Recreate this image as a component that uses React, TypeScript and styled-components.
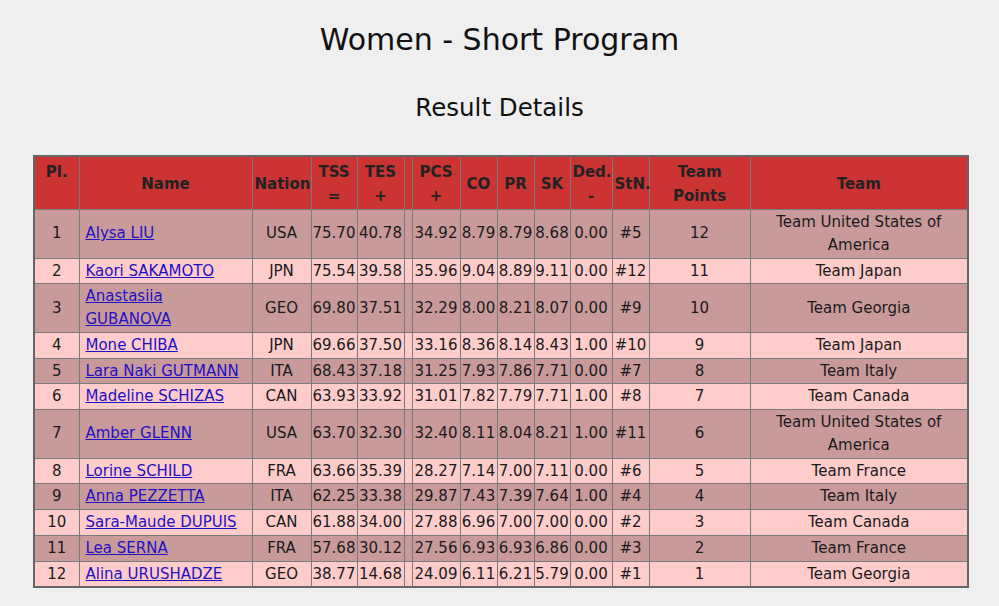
import React from 'react';
import styled, { createGlobalStyle } from 'styled-components';

const GlobalStyle = createGlobalStyle`
  body {
    margin: 0;
    background: #efefef;
    font-family: "DejaVu Sans", Verdana, sans-serif;
    color: #1a1a1a;
  }
`;

const Page = styled.div`
  display: flex;
  flex-direction: column;
  align-items: center;
  padding-top: 20px;
`;

const Title = styled.h1`
  margin: 0;
  font-size: 30px;
  font-weight: normal;
  line-height: 40px;
  color: #111;
`;

const Subtitle = styled.h2`
  margin: 28px 0 0;
  font-size: 24.5px;
  font-weight: normal;
  line-height: 40px;
  color: #111;
`;

const Table = styled.table`
  margin: 27px 0 0 3px;
  width: 934px;
  table-layout: fixed;
  border-collapse: collapse;
  border: 2px solid #666;
  font-size: 15px;
  line-height: 22.75px;
`;

const Th = styled.th<{ $top?: boolean }>`
  background: #cc3333;
  border: 1px solid #7a7a7a;
  padding: 3px 2px 1px;
  line-height: 24px;
  font-weight: bold;
  text-align: center;
  vertical-align: ${(p) => (p.$top ? 'top' : 'middle')};
  color: #222;
`;

const Row = styled.tr<{ $odd: boolean }>`
  background: ${(p) => (p.$odd ? '#c99a9a' : '#ffcccc')};
`;

const Td = styled.td<{ $left?: boolean }>`
  border: 1px solid #7a7a7a;
  padding: 1px ${(p) => (p.$left ? '6px' : '0')};
  text-align: ${(p) => (p.$left ? 'left' : 'center')};
  vertical-align: middle;
  white-space: ${(p) => (p.$left ? 'normal' : 'nowrap')};
`;

const TeamTd = styled(Td)`
  white-space: normal;
  padding: 1px 8px;
`;

const NameLink = styled.a`
  color: #1f10c4;
  text-decoration: underline;
`;

const widths = [45, 173, 59, 46, 47, 8, 48, 37, 37, 36, 42, 37, 101, 218];

type Result = {
  pl: number;
  name: string;
  nation: string;
  tss: string;
  tes: string;
  pcs: string;
  co: string;
  pr: string;
  sk: string;
  ded: string;
  stn: string;
  points: number;
  team: string;
};

const results: Result[] = [
  { pl: 1, name: 'Alysa LIU', nation: 'USA', tss: '75.70', tes: '40.78', pcs: '34.92', co: '8.79', pr: '8.79', sk: '8.68', ded: '0.00', stn: '#5', points: 12, team: 'Team United States of America' },
  { pl: 2, name: 'Kaori SAKAMOTO', nation: 'JPN', tss: '75.54', tes: '39.58', pcs: '35.96', co: '9.04', pr: '8.89', sk: '9.11', ded: '0.00', stn: '#12', points: 11, team: 'Team Japan' },
  { pl: 3, name: 'Anastasiia GUBANOVA', nation: 'GEO', tss: '69.80', tes: '37.51', pcs: '32.29', co: '8.00', pr: '8.21', sk: '8.07', ded: '0.00', stn: '#9', points: 10, team: 'Team Georgia' },
  { pl: 4, name: 'Mone CHIBA', nation: 'JPN', tss: '69.66', tes: '37.50', pcs: '33.16', co: '8.36', pr: '8.14', sk: '8.43', ded: '1.00', stn: '#10', points: 9, team: 'Team Japan' },
  { pl: 5, name: 'Lara Naki GUTMANN', nation: 'ITA', tss: '68.43', tes: '37.18', pcs: '31.25', co: '7.93', pr: '7.86', sk: '7.71', ded: '0.00', stn: '#7', points: 8, team: 'Team Italy' },
  { pl: 6, name: 'Madeline SCHIZAS', nation: 'CAN', tss: '63.93', tes: '33.92', pcs: '31.01', co: '7.82', pr: '7.79', sk: '7.71', ded: '1.00', stn: '#8', points: 7, team: 'Team Canada' },
  { pl: 7, name: 'Amber GLENN', nation: 'USA', tss: '63.70', tes: '32.30', pcs: '32.40', co: '8.11', pr: '8.04', sk: '8.21', ded: '1.00', stn: '#11', points: 6, team: 'Team United States of America' },
  { pl: 8, name: 'Lorine SCHILD', nation: 'FRA', tss: '63.66', tes: '35.39', pcs: '28.27', co: '7.14', pr: '7.00', sk: '7.11', ded: '0.00', stn: '#6', points: 5, team: 'Team France' },
  { pl: 9, name: 'Anna PEZZETTA', nation: 'ITA', tss: '62.25', tes: '33.38', pcs: '29.87', co: '7.43', pr: '7.39', sk: '7.64', ded: '1.00', stn: '#4', points: 4, team: 'Team Italy' },
  { pl: 10, name: 'Sara-Maude DUPUIS', nation: 'CAN', tss: '61.88', tes: '34.00', pcs: '27.88', co: '6.96', pr: '7.00', sk: '7.00', ded: '0.00', stn: '#2', points: 3, team: 'Team Canada' },
  { pl: 11, name: 'Lea SERNA', nation: 'FRA', tss: '57.68', tes: '30.12', pcs: '27.56', co: '6.93', pr: '6.93', sk: '6.86', ded: '0.00', stn: '#3', points: 2, team: 'Team France' },
  { pl: 12, name: 'Alina URUSHADZE', nation: 'GEO', tss: '38.77', tes: '14.68', pcs: '24.09', co: '6.11', pr: '6.21', sk: '5.79', ded: '0.00', stn: '#1', points: 1, team: 'Team Georgia' },
];

const App = () => (
  <Page>
    <GlobalStyle />
    <Title>Women - Short Program</Title>
    <Subtitle>Result Details</Subtitle>
    <Table>
      <colgroup>
        {widths.map((w, i) => (
          <col key={i} style={{ width: w }} />
        ))}
      </colgroup>
      <thead>
        <tr>
          <Th $top>Pl.</Th>
          <Th>Name</Th>
          <Th>Nation</Th>
          <Th>TSS<br />=</Th>
          <Th>TES<br />+</Th>
          <Th />
          <Th>PCS<br />+</Th>
          <Th>CO</Th>
          <Th>PR</Th>
          <Th>SK</Th>
          <Th>Ded.<br />-</Th>
          <Th>StN.</Th>
          <Th>Team<br />Points</Th>
          <Th>Team</Th>
        </tr>
      </thead>
      <tbody>
        {results.map((r) => (
          <Row key={r.pl} $odd={r.pl % 2 === 1}>
            <Td>{r.pl}</Td>
            <Td $left>
              <NameLink href="#">{r.name}</NameLink>
            </Td>
            <Td>{r.nation}</Td>
            <Td>{r.tss}</Td>
            <Td>{r.tes}</Td>
            <Td />
            <Td>{r.pcs}</Td>
            <Td>{r.co}</Td>
            <Td>{r.pr}</Td>
            <Td>{r.sk}</Td>
            <Td>{r.ded}</Td>
            <Td>{r.stn}</Td>
            <Td>{r.points}</Td>
            <TeamTd>{r.team}</TeamTd>
          </Row>
        ))}
      </tbody>
    </Table>
  </Page>
);

export default App;
